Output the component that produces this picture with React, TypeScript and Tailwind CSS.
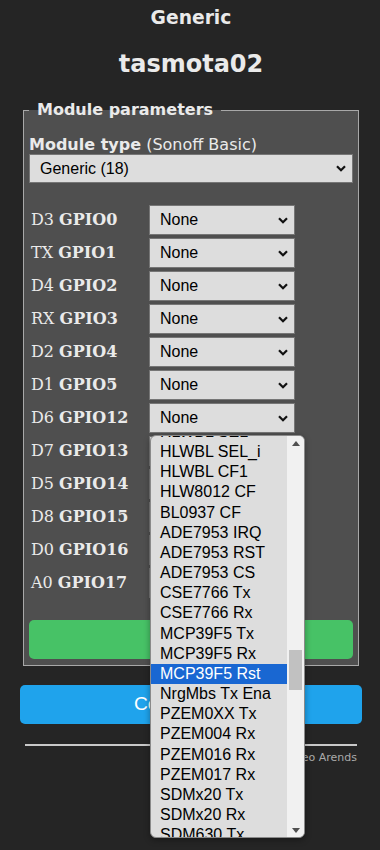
import React from 'react';

const pins: [string, string][] = [
  ['D3', 'GPIO0'],
  ['TX', 'GPIO1'],
  ['D4', 'GPIO2'],
  ['RX', 'GPIO3'],
  ['D2', 'GPIO4'],
  ['D1', 'GPIO5'],
  ['D6', 'GPIO12'],
  ['D7', 'GPIO13'],
  ['D5', 'GPIO14'],
  ['D8', 'GPIO15'],
  ['D0', 'GPIO16'],
  ['A0', 'GPIO17'],
];

const options = [
  'HLWBL SEL',
  'HLWBL SEL_i',
  'HLWBL CF1',
  'HLW8012 CF',
  'BL0937 CF',
  'ADE7953 IRQ',
  'ADE7953 RST',
  'ADE7953 CS',
  'CSE7766 Tx',
  'CSE7766 Rx',
  'MCP39F5 Tx',
  'MCP39F5 Rx',
  'MCP39F5 Rst',
  'NrgMbs Tx Ena',
  'PZEM0XX Tx',
  'PZEM004 Rx',
  'PZEM016 Rx',
  'PZEM017 Rx',
  'SDMx20 Tx',
  'SDMx20 Rx',
  'SDM630 Tx',
  'SDM630 Rx',
];

function Chevron() {
  return (
    <svg width="10" height="7" viewBox="0 0 10 7">
      <path d="M1 1.3 L5 5.3 L9 1.3" stroke="#111" strokeWidth="2.2" fill="none" />
    </svg>
  );
}

// fake <select> look, closed state
function SelectBox({ value, className }: { value: string; className: string }) {
  return (
    <div
      className={
        'flex items-center justify-between border border-[#767676] bg-[#dddddd] pl-[10px] pr-[6px] text-[16px] text-black font-[Liberation_Sans,Arial,sans-serif] ' +
        className
      }
    >
      <span>{value}</span>
      <Chevron />
    </div>
  );
}

// the open option list of GPIO12
function DropList() {
  return (
    <div className="absolute left-[150px] top-[435px] flex h-[403px] w-[155px] overflow-hidden rounded-[6px] border border-[#8a8a8a] bg-[#dddddd] shadow-[0_2px_6px_rgba(0,0,0,0.35)]">
      <div className="flex-1 overflow-hidden">
        <div className="mt-[-14px]">
          {options.map((o) => (
            <div
              key={o}
              className={
                'h-[20.17px] whitespace-nowrap pl-[9px] text-[16px] leading-[20px] font-[Liberation_Sans,Arial,sans-serif] ' +
                (o === 'MCP39F5 Rst' ? 'bg-[#1967d2] text-white' : 'text-black')
              }
            >
              {o}
            </div>
          ))}
        </div>
      </div>
      <div className="flex w-[17px] flex-col bg-[#f1f1f1]">
        <div className="flex h-[14px] items-center justify-center">
          <svg width="8" height="5" viewBox="0 0 8 5">
            <path d="M0 5 L4 0 L8 5 Z" fill="#505050" />
          </svg>
        </div>
        <div className="flex-1">
          <div className="ml-[2px] mt-[200px] h-[40px] w-[13px] bg-[#c1c1c1]" />
        </div>
        <div className="flex h-[14px] items-center justify-center">
          <svg width="8" height="5" viewBox="0 0 8 5">
            <path d="M0 0 L8 0 L4 5 Z" fill="#505050" />
          </svg>
        </div>
      </div>
    </div>
  );
}

export default function App() {
  return (
    <div className="relative min-h-[850px] w-full bg-[#252525] text-[#eaeaea] font-['DejaVu_Sans',Verdana,sans-serif]">
      <div className="ml-[20px] w-[342px]">
        <div className="pt-[7px] text-center">
          <div className="text-[18.72px] font-bold leading-[22px]">Generic</div>
          <div className="mt-[21px] text-[24px] font-bold leading-[28px]">tasmota02</div>
        </div>

        <fieldset className="mx-[3px] mt-[20px] border border-[#a8a8a8] bg-[#4f4f4f] px-[5px] pb-[6px]">
          <legend className="px-2 text-[16px] font-bold">Module parameters</legend>

          <div className="mt-[13px] h-[19px] text-[16px] leading-[19px]">
            <b>Module type</b> (Sonoff Basic)
          </div>
          <SelectBox value="Generic (18)" className="h-[29px] w-full" />

          <div className="mt-[22px] flex flex-col gap-[3px]">
            {pins.map(([d, g]) => (
              <div key={g} className="flex h-[30px] items-center">
                <div className="w-[120px] pl-[2px] text-[16px] font-['DejaVu_Serif',serif]">
                  {d} <b>{g}</b>
                </div>
                <SelectBox value="None" className="h-[30px] w-[146px]" />
              </div>
            ))}
          </div>

          <button className="mt-[22px] h-[39px] w-full rounded-[5px] bg-[#47c266] text-[19.2px] text-white font-[Liberation_Sans,Arial,sans-serif]">
            Save
          </button>
        </fieldset>

        <button className="mt-[19px] h-[39px] w-full rounded-[5px] bg-[#1fa3ec] text-[19.2px] text-white font-[Liberation_Sans,Arial,sans-serif]">
          Configuration
        </button>

        <div className="mx-[5px] mt-[20px] border-t-2 border-[#c8c8c8]" />
        <div className="mx-[5px] mt-[5px] text-right text-[11px] leading-[13px] text-[#aaaaaa]">
          Tasmota 9.1.0 by Theo Arends
        </div>
      </div>

      <DropList />
    </div>
  );
}
